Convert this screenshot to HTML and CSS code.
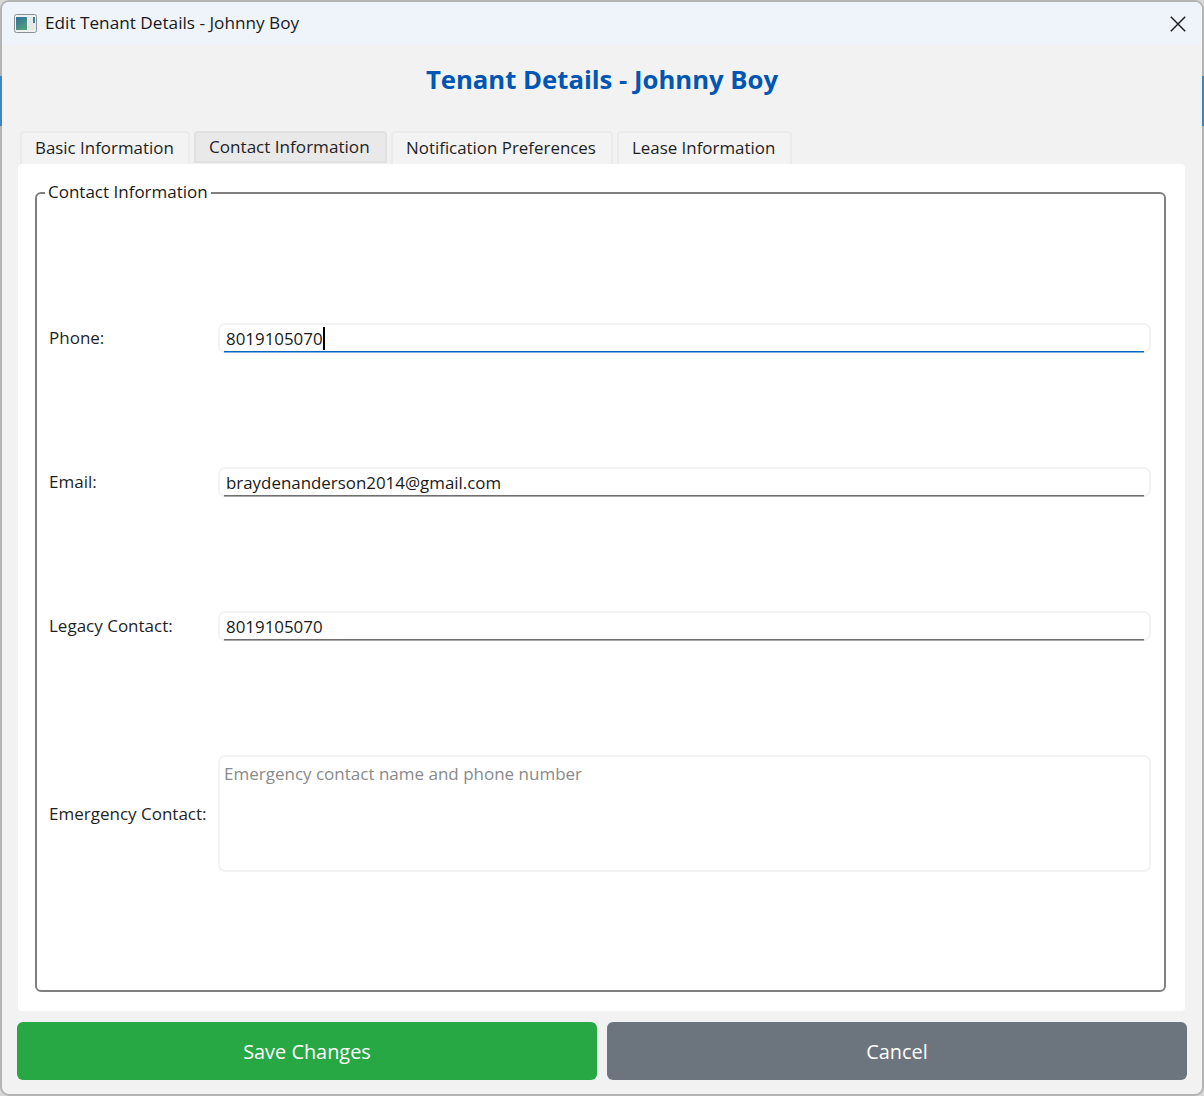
FILE: index.html
```html
<!DOCTYPE html>
<html lang="en">
<head>
    <meta charset="UTF-8">
    <meta name="viewport" content="width=device-width, initial-scale=1.0">
    <title>Edit Tenant Details - Johnny Boy</title>
    <link rel="stylesheet" href="styles.css">
</head>
<body>
    <div class="edge edge-left"></div>
    <div class="edge edge-right"></div>

    <div class="window">
        <!-- Title bar -->
        <div class="titlebar">
            <svg class="app-icon" width="24" height="20" viewBox="0 0 24 20">
                <defs>
                    <linearGradient id="pane" x1="0" y1="0" x2="0.6" y2="1">
                        <stop offset="0" stop-color="#2f6f9e"/>
                        <stop offset="1" stop-color="#4f9e78"/>
                    </linearGradient>
                </defs>
                <rect x="0.5" y="0.5" width="22" height="18" rx="2" fill="#eef1f2" stroke="#8a8f94"/>
                <rect x="2" y="3" width="11" height="13" fill="url(#pane)"/>
                <rect x="14" y="3" width="7" height="13" fill="#e4e8e6"/>
                <rect x="19" y="3" width="2" height="6" fill="#3d7d94"/>
            </svg>
            <span class="title-text">Edit Tenant Details - Johnny Boy</span>
            <svg class="close-icon" width="16" height="16" viewBox="0 0 16 16">
                <path d="M0.8 0.8L15.2 15.2M15.2 0.8L0.8 15.2" stroke="#1a1a1a" stroke-width="1.4" fill="none"/>
            </svg>
        </div>

        <div class="content">
            <h1 class="heading">Tenant Details - Johnny Boy</h1>

            <div class="tabs">
                <div class="tab tab-basic">Basic Information</div>
                <div class="tab tab-contact active">Contact Information</div>
                <div class="tab tab-notify">Notification Preferences</div>
                <div class="tab tab-lease">Lease Information</div>
            </div>

            <div class="panel">
                <fieldset class="group">
                    <legend>Contact Information</legend>

                    <div class="row">
                        <label>Phone:</label>
                        <div class="field focused">8019105070<span class="caret"></span></div>
                    </div>
                    <div class="row">
                        <label>Email:</label>
                        <div class="field">braydenanderson2014@gmail.com</div>
                    </div>
                    <div class="row">
                        <label>Legacy Contact:</label>
                        <div class="field">8019105070</div>
                    </div>
                    <div class="row row-tall">
                        <label>Emergency Contact:</label>
                        <div class="textarea">Emergency contact name and phone number</div>
                    </div>
                </fieldset>
            </div>

            <div class="actions">
                <button class="btn btn-save">Save Changes</button>
                <button class="btn btn-cancel">Cancel</button>
            </div>
        </div>
    </div>
</body>
</html>
```

FILE: styles.css
```css
* {
    box-sizing: border-box;
}

html, body {
    height: 100%;
}

body {
    margin: 0;
    height: 1096px;
    overflow: hidden;
    position: relative;
    background: #d8d8d8;
    font-family: "Open Sans", "Noto Sans", sans-serif;
    font-size: 17px;
    color: #1f1f1f;
}

.edge {
    position: absolute;
    top: 76px;
    width: 2px;
    height: 50px;
    background: #3d85c0;
    z-index: 2;
}

.edge-left {
    left: 0;
}

.edge-right {
    right: 0;
}

.window {
    height: 1096px;
    border: 2px solid #b4b4b4;
    border-radius: 9px;
    overflow: hidden;
    background: #f2f2f2;
    display: flex;
    flex-direction: column;
}

.titlebar {
    height: 43px;
    flex: none;
    background: #eff3fa;
    display: flex;
    align-items: center;
    padding: 0 10px 2px 12px;
}

.app-icon {
    flex: none;
    margin: 2px 7px 0 0;
}

.title-text {
    flex: 1;
    font-size: 17.2px;
    color: #1a1a1a;
}

.close-icon {
    flex: none;
    margin: 2px 6px 0 0;
}

.content {
    flex: 1;
    padding: 0 15px;
    display: flex;
    flex-direction: column;
}

.heading {
    margin: 0;
    height: 86px;
    padding-top: 17px;
    text-align: center;
    font-size: 25.7px;
    line-height: 36px;
    font-weight: 700;
    color: #0056b3;
}

.tabs {
    display: flex;
    gap: 4px;
    padding-left: 3px;
    height: 33px;
    flex: none;
}

.tab {
    height: 33px;
    padding: 1px 0 0 13px;
    line-height: 28px;
    font-size: 16.9px;
    background: #f3f3f3;
    border: 2px solid #ebebeb;
    border-bottom: none;
    border-radius: 4px 4px 0 0;
}

.tab-basic {
    width: 170px;
}

.tab-contact {
    width: 193px;
}

.tab-notify {
    width: 222px;
}

.tab-lease {
    width: 175px;
}

.tab.active {
    padding-top: 0;
    font-size: 17.1px;
    background: #e9e9e9;
    border-color: #e1e1e1;
    border-bottom: 2px solid #e1e1e1;
    height: 32px;
}

.panel {
    height: 847px;
    flex: none;
    margin-left: 1px;
    margin-right: 2px;
    background: #fff;
    border-radius: 4px;
    padding: 17px 19px 19px 17px;
}

.group {
    margin: 0;
    height: 100%;
    padding: 118px 13px 0 11px;
    border: 2px solid #808080;
    border-radius: 6px;
    display: flex;
    flex-direction: column;
    gap: 114px;
}

.group legend {
    padding: 0 3px 2px;
    margin-left: -3px;
    font-size: 17px;
    line-height: 22px;
    color: #1a1a1a;
}

.row {
    display: flex;
    align-items: center;
}

.row label {
    width: 170px;
    flex: none;
    padding: 0 0 2px 1px;
    font-size: 17px;
    color: #1f1f1f;
}

.row-tall label {
    padding-bottom: 0;
}

.field {
    flex: 1;
    position: relative;
    height: 30px;
    padding: 1px 0 0 6px;
    line-height: 26px;
    border: 2px solid #f3f3f3;
    border-radius: 7px;
    color: #1a1a1a;
    font-size: 16.9px;
}

/* underline sits over the bottom border, inset from the corners */
.field::after {
    content: "";
    position: absolute;
    left: 4px;
    right: 5px;
    bottom: -2px;
    height: 2px;
    background: linear-gradient(#6f6f6f 50%, #a8a8a8 50%);
}

.field.focused::after {
    background: linear-gradient(#0067c0 50%, #7fb0e0 50%);
}

.caret {
    display: inline-block;
    width: 2px;
    height: 23px;
    vertical-align: -5px;
    background: #000;
}

.textarea {
    flex: 1;
    height: 117px;
    padding: 5px 4px;
    border: 2px solid #f3f3f3;
    border-radius: 7px;
    color: #8a8a8a;
    line-height: 24px;
    font-size: 17px;
}

.actions {
    display: flex;
    gap: 10px;
    margin-top: 11px;
}

.btn {
    flex: 1;
    height: 58px;
    border: none;
    border-radius: 6px;
    color: #fff;
    font-family: inherit;
    font-size: 19.9px;
    cursor: pointer;
}

.btn-save {
    background: #28a745;
}

.btn-cancel {
    background: #6c757d;
}
```
